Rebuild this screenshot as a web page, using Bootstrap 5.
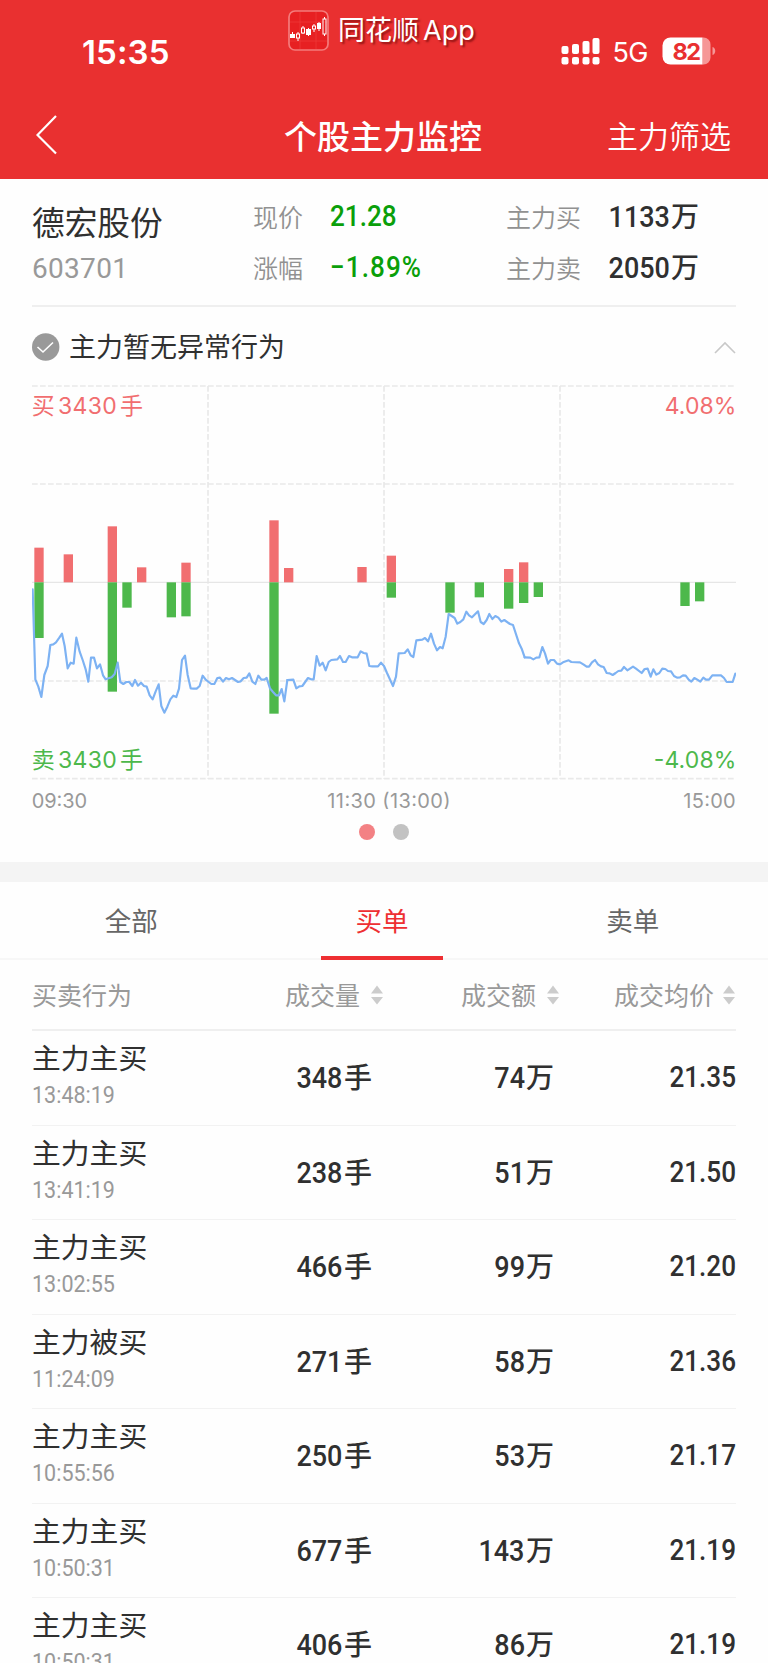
<!DOCTYPE html>
<html lang="zh-CN">
<head>
<meta charset="utf-8">
<meta name="viewport" content="width=device-width, initial-scale=1">
<title>个股主力监控</title>
<link href="https://cdn.jsdelivr.net/npm/bootstrap@5.3.0/dist/css/bootstrap.min.css" rel="stylesheet">
<style>
body{font-family:"Noto Sans CJK SC",sans-serif;color:#303030;background:#fefefe;height:1663px;overflow:hidden}
.topbar{background:#e93030;height:179px;color:#fff}
.status{height:94px}
.ui{font-family:Inter,"Noto Sans CJK SC",sans-serif}
.clock{font-size:33px;font-weight:600;line-height:40px;width:200px;padding:31.5px 0 0 82px;letter-spacing:.1px}
.brand{padding-top:10px;width:205px;margin-right:53px}
.brand-name{font-size:27px;line-height:42px;text-shadow:2px 2px 2px rgba(90,0,0,.6);white-space:nowrap}
.titlebar{height:82px;padding:0 37px 0 36px}
.page-title{font-size:33px;font-weight:500;line-height:82px;margin-left:-1px}
.filter{font-size:31px;font-weight:350}
.quote{height:128px;margin:0 32px;border-bottom:2px solid #efefef}
.stock{font-size:32.7px;line-height:44px;padding-top:20px;width:221px}
.code{font-family:Roboto,sans-serif;font-size:28px;line-height:32px;margin-top:10px;color:#999;font-weight:400;letter-spacing:.3px}
.lbl{font-size:25px;font-weight:350;color:#919191}
.pair{height:51px}
.num{font-family:Roboto,sans-serif;font-weight:500;font-size:29px;display:inline-block;transform:scaleX(.9);transform-origin:right center}
.num-l{transform-origin:left center}
.num-int{transform:scaleX(.93);margin-right:1.5px}
.pct{letter-spacing:1.2px}
.down{color:#0a9f0a}
.unit{font-size:28px;font-weight:500}
.notice{height:73px;margin:0 32px;font-size:27px;padding-top:6px}
.plot{display:block;margin:0 32px}
.dot{width:16px;height:16px;border-radius:50%;background:#c2c2c2}
.dot.on{background:#f38184}
.dots{height:53px;gap:18px;padding-top:14.5px}
.gap-band{height:20px;background:#f4f4f4}
.tabs{height:78px;padding:0 10px 0 6px;border-bottom:2px solid #f7f7f7;font-size:26.5px;color:#666}
.tab-item{line-height:76px;height:76px;text-align:center}
.tab-item.active{color:#ee2f32;position:relative}
.tab-item.active::after{content:"";position:absolute;left:64.5px;width:122px;height:4.5px;bottom:-2px;background:#ee2f32}
.cols{height:71px;margin:0 32px;border-bottom:2px solid #efefef;font-size:25px;font-weight:400;color:#999}
.sort{margin-left:7px}
.sort-near{margin-left:5px}
.deal{height:94.5px;margin:0 32px;border-bottom:1.5px solid #f2f2f2}
.deal-name{font-size:28.8px;line-height:40px;padding-top:6px}
.deal-time{line-height:28px;margin-top:4px;color:#999}
.deal-time .num{font-size:23.5px;font-weight:400;transform:scaleX(.915)}
</style>
</head>
<body>
<header class="topbar">
  <div class="status d-flex ui">
    <div class="clock">15:35</div>
    <div class="brand d-flex ms-auto">
      <svg width="42" height="42" viewBox="0 0 42 42" class="me-2 flex-shrink-0">
        <rect x="1" y="1" width="39" height="39" rx="6" fill="#e72022" stroke="#f47b7b" stroke-width="1.7"/>
        <path d="M12 2v37M28 2v37M2 12h37M2 31h37" stroke="#ef3c39" stroke-width=".7"/>
        <g fill="#fff"><rect x="2" y="24" width="5" height="4"/><rect x="18" y="19" width="5" height="6"/><rect x="29" y="13" width="4" height="6"/></g>
        <g fill="none" stroke="#fff" stroke-width="1"><path d="M4.500 22v6M20.500 18v8M31 12v9"/><rect x="8.500" y="24" width="3" height="4"/><path d="M10 22v2m0 4v3M15 16v2m0 5v1M26 14v2m0 3v3M36.500 7v2m0 15v2"/><rect x="13.500" y="18" width="3" height="5"/><rect x="24.500" y="16" width="3" height="3"/><rect x="35" y="9" width="3" height="15"/></g>
      </svg>
      <span class="brand-name">同花顺<span class="ms-1">App</span></span>
    </div>
    <svg width="174" height="70" viewBox="0 0 174 70" class="me-5">
      <g fill="#fff" transform="translate(15.500 0)">
        <rect x="0" y="46" width="7" height="8" rx="2"/><rect x="10.500" y="44" width="7" height="10" rx="2"/><rect x="21" y="41" width="7" height="13" rx="2"/><rect x="31" y="38" width="7" height="16" rx="2"/>
        <rect x="0" y="57" width="7" height="7.500" rx="2"/><rect x="10.500" y="57" width="7" height="7.500" rx="2"/><rect x="21" y="57" width="7" height="7.500" rx="2"/><rect x="31" y="57" width="7" height="7.500" rx="2"/>
        <text x="51" y="62" font-size="27" textLength="36">5G</text>
        <path d="M141 37.500h1a7 7 0 0 1 7 7v13a7 7 0 0 1-7 7h-1zM151 47c3.700 1 3.700 7 0 8z" fill="#f69797"/>
        <path d="M109 37.500h32v27h-32a8 8 0 0 1-8-8v-11a8 8 0 0 1 8-8z"/>
        <text x="111" y="59.500" font-size="23.500" font-weight="700" fill="#e93030" textLength="28.500">82</text>
      </g>
    </svg>
  </div>
  <nav class="titlebar row g-0 align-items-center">
    <div class="col"><svg width="22" height="40" viewBox="0 0 22 40"><path d="M20 1L1.500 20L20 38.500" fill="none" stroke="#fff" stroke-width="2.200"/></svg></div>
    <div class="col-auto page-title">个股主力监控</div>
    <div class="col text-end filter">主力筛选</div>
  </nav>
</header>

<section class="quote d-flex">
  <div class="stock">德宏股份<div class="code">603701</div></div>
  <div style="width:253px;padding-top:12px">
    <div class="pair d-flex align-items-center"><span class="lbl" style="width:77px">现价</span><span class="num num-l down">21.28</span></div>
    <div class="pair d-flex align-items-center"><span class="lbl" style="width:77px">涨幅</span><span class="num num-l down pct">−1.89%</span></div>
  </div>
  <div style="padding-top:12px;width:193px">
    <div class="pair d-flex align-items-center justify-content-between"><span class="lbl">主力买</span><span><span class="num num-int">1133</span><span class="unit">万</span></span></div>
    <div class="pair d-flex align-items-center justify-content-between"><span class="lbl">主力卖</span><span><span class="num num-int">2050</span><span class="unit">万</span></span></div>
  </div>
</section>

<div class="notice d-flex align-items-center">
  <svg width="28" height="28" viewBox="0 0 28 28"><circle cx="13.700" cy="14" r="13.700" fill="#999"/><path d="M5.500 14l5.500 5L21 9.500" fill="none" stroke="#fff" stroke-width="1.600"/></svg>
  <span style="margin-left:9px">主力暂无异常行为</span>
  <svg class="ms-auto" width="22" height="14" viewBox="0 0 22 14"><path d="M1 13L11 3L21 13" fill="none" stroke="#c8c8c8" stroke-width="1.600"/></svg>
</div>

<svg class="plot ui" width="704" height="429" viewBox="36 0 2112 1287">
  <g fill="none" stroke="#e9e9e9" stroke-width="5">
    <path stroke-dasharray="17 7" d="M36 18H2148M36 312H2148M36 903H2148M36 1196H2148M564 18V1196M1092 18V1196M1620 18V1196"/>
    <path d="M36 607H2148" stroke-width="4" stroke="#e6e6e6"/>
  </g>
  <g fill="#f16e70">
    <rect x="43" y="503" width="28" height="104"/><rect x="131" y="523" width="28" height="84"/><rect x="263" y="439" width="28" height="168"/><rect x="351" y="562" width="28" height="45"/><rect x="484" y="548" width="28" height="59"/><rect x="748" y="421" width="28" height="186"/><rect x="792" y="564" width="28" height="43"/><rect x="1012" y="561" width="28" height="46"/><rect x="1100" y="527" width="28" height="80"/><rect x="1452" y="567" width="28" height="40"/><rect x="1497" y="547" width="28" height="60"/>
  </g>
  <g fill="#4db84b">
    <rect x="43" y="607" width="28" height="167"/><rect x="263" y="607" width="28" height="328"/><rect x="307" y="607" width="28" height="76"/><rect x="440" y="607" width="28" height="105"/><rect x="484" y="607" width="28" height="102"/><rect x="748" y="607" width="28" height="394"/><rect x="1100" y="607" width="28" height="46"/><rect x="1276" y="607" width="28" height="91"/><rect x="1364" y="607" width="28" height="45"/><rect x="1452" y="607" width="28" height="79"/><rect x="1497" y="607" width="28" height="62"/><rect x="1541" y="607" width="28" height="44"/><rect x="1981" y="607" width="28" height="71"/><rect x="2025" y="607" width="28" height="57"/>
  </g>
  <g fill="none" stroke="#7db2f3" stroke-width="6.500" stroke-linejoin="round" stroke-linecap="round">
    <polyline points="38,628 46,898 55,920 64,951 73,885 83,858 91,795 100,793 108,787 118,773 126,761 134,798 143,865 152,848 161,851 169,773 179,815 188,840 197,868 205,905 213,833 222,833 231,865 240,853 249,886 257,898 266,895 275,892 284,882 293,848 301,906 310,912 319,906 328,906 337,918 345,900 354,917 363,908 372,918 380,920 389,946 398,958 407,934 416,913 424,978 433,998 442,980 451,958 460,947 469,951 477,926 486,840 495,827 503,885 512,925 521,926 530,926 539,918 548,887 557,899 566,906 574,912 583,912 592,894 600,893 609,905 618,894 627,898 636,894 645,900 654,906 662,904 671,894 680,893 688,880 697,905 706,912 715,887 724,899 733,899 740,894 750,925 759,936 768,946 777,946 785,927 793,964 802,900"/>
    <polyline transform="translate(720 0)" points="82,900 100,899 109,925 118,919 127,918 144,894 153,898 161,898 170,828 179,857 188,848 197,871 206,846 214,840 232,838 240,828 249,846 257,846 267,828 276,832 293,832 302,814 311,819 320,821 328,858 337,859 354,859 363,848 372,858 381,879 399,918 408,890 416,820 434,819 443,808 452,826 460,831 469,781 487,779 495,774 504,784 513,761 522,791 531,811 540,801 548,805 557,770 566,702 575,708 584,714 592,731 601,726 610,718 619,695 627,706 636,712 654,694 662,726 671,732 680,720 688,702 697,717 706,708 715,713 724,725 733,720 750,732 759,735 777,790 785,806 794,832"/>
    <polyline transform="translate(1440 0)" points="74,832 91,833 100,838 109,833 118,832 127,801 135,820 144,851 152,840 162,840 171,851 180,853 189,847 206,841 214,846 240,847 250,853 260,860 267,860 276,847 285,840 294,853 303,859 311,861 320,879 329,880 338,885 347,879 355,873 364,872 372,861 382,871 399,860 408,866 425,879 434,867 443,866 452,890 460,868 469,884 478,879 487,866 496,867 504,873 513,874 522,888 531,893 540,892 549,886 557,887 566,899 574,905 583,894 592,899 601,905 610,893 618,899 627,899 637,886 663,886 672,894 680,906 698,906 706,881"/>
  </g>
  <g font-size="69">
    <g fill="#f16e70"><text x="35" y="102">买</text><text x="114" y="102" textLength="176">3430</text><text x="300" y="102">手</text><text x="2149" y="102" text-anchor="end" textLength="215">4.08%</text></g>
    <g fill="#4db84b"><text x="35" y="1164">卖</text><text x="114" y="1164" textLength="176">3430</text><text x="300" y="1164">手</text><text x="2149" y="1164" text-anchor="end" textLength="248">-4.08%</text></g>
  </g>
  <g font-size="60" fill="#999">
    <text x="35" y="1285" textLength="166">09:30</text><text x="922" y="1285" textLength="370">11:30 (13:00)</text><text x="2147" y="1285" text-anchor="end" textLength="157">15:00</text>
  </g>
</svg>
<div class="dots d-flex justify-content-center"><span class="dot on"></span><span class="dot"></span></div>
<div class="gap-band"></div>

<div class="tabs row g-0">
  <div class="col tab-item">全部</div><div class="col tab-item active">买单</div><div class="col tab-item">卖单</div>
</div>
<div class="cols row g-0 align-items-center">
  <div class="col-3">买卖行为</div>
  <div class="col-3 d-flex align-items-center justify-content-end">成交量<svg class="sort" width="17" height="20" viewBox="0 0 17 20"><path d="M4 8.500L10 .5L16 8.500zM4 12H16L10 19.500z" fill="#ccc"/></svg></div>
  <div class="col-3 d-flex align-items-center justify-content-end">成交额<svg class="sort" width="17" height="20" viewBox="0 0 17 20"><path d="M4 8.500L10 .5L16 8.500zM4 12H16L10 19.500z" fill="#ccc"/></svg></div>
  <div class="col-3 d-flex align-items-center justify-content-end">成交均价<svg class="sort-near" width="17" height="20" viewBox="0 0 17 20"><path d="M4 8.500L10 .5L16 8.500zM4 12H16L10 19.500z" fill="#ccc"/></svg></div>
</div>
<main id="deals"></main>

<script src="https://cdn.jsdelivr.net/npm/bootstrap@5.3.0/dist/js/bootstrap.bundle.min.js"></script>
<script>
const deals = [
  ['主力主买','13:48:19',348,74,'21.35'],
  ['主力主买','13:41:19',238,51,'21.50'],
  ['主力主买','13:02:55',466,99,'21.20'],
  ['主力被买','11:24:09',271,58,'21.36'],
  ['主力主买','10:55:56',250,53,'21.17'],
  ['主力主买','10:50:31',677,143,'21.19'],
  ['主力主买','10:50:31',406,86,'21.19']
];
document.getElementById('deals').innerHTML = deals.map(([name, time, vol, amt, price]) => `
  <div class="deal row g-0">
    <div class="col-3"><div class="deal-name">${name}</div><div class="deal-time"><span class="num num-l">${time}</span></div></div>
    <div class="col-3 text-end align-self-center" style="padding-right:12px"><span class="num num-int">${vol}</span><span class="unit">手</span></div>
    <div class="col-3 text-end align-self-center" style="padding-right:6px"><span class="num num-int">${amt}</span><span class="unit">万</span></div>
    <div class="col-3 text-end align-self-center"><span class="num">${price}</span></div>
  </div>`).join('');
</script>
</body>
</html>
